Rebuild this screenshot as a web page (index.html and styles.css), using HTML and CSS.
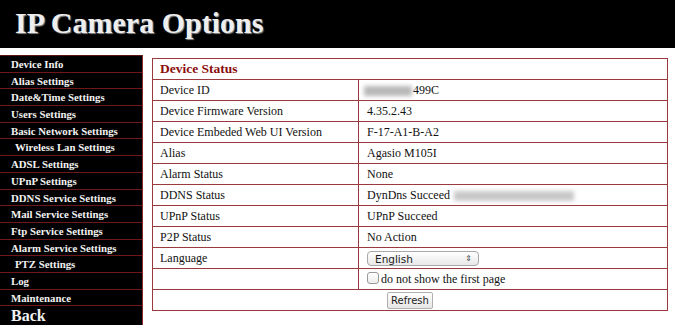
FILE: index.html
```html
<!DOCTYPE html>
<html lang="en">
<head>
    <meta charset="UTF-8">
    <title>IP Camera Options</title>
    <link rel="stylesheet" href="styles.css">
</head>
<body>
    <div class="top-bar">
        <h1>IP Camera Options</h1>
    </div>
    <div class="page">
        <ul class="menu">
            <li>Device Info</li>
            <li>Alias Settings</li>
            <li>Date&amp;Time Settings</li>
            <li>Users Settings</li>
            <li>Basic Network Settings</li>
            <li class="indent">Wireless Lan Settings</li>
            <li>ADSL Settings</li>
            <li>UPnP Settings</li>
            <li>DDNS Service Settings</li>
            <li>Mail Service Settings</li>
            <li>Ftp Service Settings</li>
            <li>Alarm Service Settings</li>
            <li class="indent">PTZ Settings</li>
            <li>Log</li>
            <li>Maintenance</li>
            <li class="back">Back</li>
        </ul>
        <div class="content">
            <table class="status-table">
                <tr>
                    <th colspan="2">Device Status</th>
                </tr>
                <tr>
                    <td class="label">Device ID</td>
                    <td><span class="blur id-blur"></span>499C</td>
                </tr>
                <tr>
                    <td class="label">Device Firmware Version</td>
                    <td>4.35.2.43</td>
                </tr>
                <tr>
                    <td class="label">Device Embeded Web UI Version</td>
                    <td>F-17-A1-B-A2</td>
                </tr>
                <tr>
                    <td class="label">Alias</td>
                    <td>Agasio M105I</td>
                </tr>
                <tr>
                    <td class="label">Alarm Status</td>
                    <td>None</td>
                </tr>
                <tr>
                    <td class="label">DDNS Status</td>
                    <td>DynDns Succeed <span class="blur ddns-blur"></span></td>
                </tr>
                <tr>
                    <td class="label">UPnP Status</td>
                    <td>UPnP Succeed</td>
                </tr>
                <tr>
                    <td class="label">P2P Status</td>
                    <td>No Action</td>
                </tr>
                <tr>
                    <td class="label">Language</td>
                    <td>
                        <div class="fake-select">
                            <span>English</span>
                            <span class="arrows">&#8661;</span>
                        </div>
                    </td>
                </tr>
                <tr>
                    <td class="label"></td>
                    <td><span class="check"></span>do not show the first page</td>
                </tr>
                <tr>
                    <td colspan="2" class="center"><button class="btn">Refresh</button></td>
                </tr>
            </table>
        </div>
    </div>
</body>
</html>
```

FILE: styles.css
```css
body {
    margin: 0;
    padding: 0;
    background-color: white;
    font-family: "Liberation Serif", "Times New Roman", serif;
    overflow: hidden;
}
.top-bar {
    background-color: black;
    height: 48px;
    padding-left: 15px;
}
.top-bar h1 {
    margin: 0;
    padding-top: 6px;
    font-size: 30px;
    line-height: 34px;
    color: #eeeeee;
    text-shadow: 1px 1px 1px #888;
}
.page {
    display: flex;
    align-items: flex-start;
}
.menu {
    list-style: none;
    margin: 7px 0 0 0;
    padding: 0;
    width: 142px;
    background-color: black;
    border-top: 1px solid #5a1414;
    border-right: 1px solid #8a2a2a;
}
.menu li {
    height: 15.7px;
    line-height: 16px;
    padding-left: 11px;
    color: #f2f2f2;
    font-weight: bold;
    font-size: 10.8px;
    border-bottom: 1px solid #701818;
    white-space: nowrap;
}
.menu li.indent {
    padding-left: 15px;
}
.menu li.back {
    font-size: 16px;
    height: 22px;
    line-height: 20px;
    border-bottom: none;
}
.content {
    padding: 10px 0 0 9px;
}
.status-table {
    border-collapse: collapse;
    width: 516px;
    border: 1px solid #9a3a3e;
    font-size: 12px;
    color: #111;
}
.status-table th {
    text-align: left;
    color: #8b0d0d;
    font-size: 13.5px;
    height: 20px;
    padding: 0 7px;
    border-bottom: 1px solid #9a3a3e;
}
.status-table td {
    height: 20px;
    padding: 0 8px;
    border-top: 1px solid #9a3a3e;
    white-space: nowrap;
}
.status-table td.label {
    width: 190px;
    padding-left: 7px;
    border-right: 1px solid #9a3a3e;
}
.status-table td.center {
    text-align: center;
}
.blur {
    display: inline-block;
    vertical-align: middle;
    height: 10px;
    background-color: #b8b8b8;
    filter: blur(2px);
}
.id-blur {
    width: 48px;
    margin-left: -3px;
    margin-right: 1px;
}
.ddns-blur {
    width: 120px;
    margin-left: 1px;
    background-color: #c8c8c8;
}
.fake-select {
    display: inline-flex;
    justify-content: space-between;
    align-items: center;
    height: 15px;
    margin-top: 1px;
    padding: 0 6px 0 7px;
    box-sizing: border-box;
    width: 112px;
    border: 1px solid #a8a8a8;
    border-radius: 4px;
    background: linear-gradient(#ffffff, #e8e8e8);
    font-family: "DejaVu Sans", sans-serif;
    font-size: 10.5px;
    color: #222;
    vertical-align: middle;
}
.fake-select .arrows {
    font-size: 8px;
    color: #444;
}
.check {
    display: inline-block;
    width: 10px;
    height: 10px;
    margin-right: 2px;
    border: 1px solid #9a9a9a;
    border-radius: 3px;
    background: linear-gradient(#ffffff, #ececec);
    vertical-align: -1px;
}
.btn {
    font-family: "DejaVu Sans", sans-serif;
    font-size: 10px;
    color: #222;
    height: 17px;
    padding: 0 3px;
    border: 1px solid #b0b0b0;
    border-radius: 2px;
    background: linear-gradient(#ffffff, #e6e6e6);
}
```
